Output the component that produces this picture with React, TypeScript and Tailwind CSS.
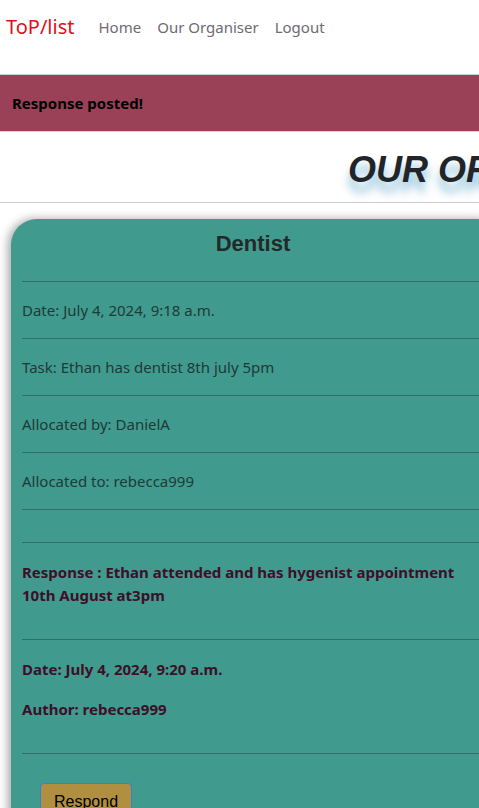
import React from 'react';

const body = { fontFamily: '"Noto Sans", "Open Sans", sans-serif' };
const arial = { fontFamily: '"Liberation Sans", Arial, sans-serif' };

// one line of task detail, separated by a rule underneath
function DetailRow({ children }: { children: React.ReactNode }) {
  return (
    <div className="border-b border-[#2f6f66]">
      <p className="py-4 leading-6 text-[15px] text-[#1d3b37]">{children}</p>
    </div>
  );
}

export default function App() {
  return (
    <div className="w-full min-h-[808px] overflow-hidden bg-white" style={body}>
      {/* Navbar */}
      <nav className="h-[75px] flex items-start pt-[13px] pl-[6px] border-b border-[#bcd9d6]">
        <span className="text-[20px] leading-7 text-[#e0101c]">ToP/list</span>
        <ul className="flex ml-[24px] gap-4 text-[15px] leading-7 text-[#6f6a72]">
          <li>Home</li>
          <li>Our Organiser</li>
          <li>Logout</li>
        </ul>
      </nav>

      {/* Alert */}
      <div className="h-[57px] bg-[#9a4158] border-b border-[#d5d5d5] flex items-center pl-[12px] pt-[1px]">
        <strong className="text-[15px] text-black">Response posted!</strong>
      </div>

      {/* Page heading */}
      <div className="w-[1004px] h-[71px] border-b border-[#cccccc] flex justify-center items-center pt-[6px]">
        <h1
          className="text-[36px] font-bold italic text-[#212529] whitespace-nowrap [text-shadow:0_10px_10px_rgba(90,165,200,0.7)]"
          style={arial}
        >
          OUR ORGANISER
        </h1>
      </div>

      {/* Task card */}
      <div className="mt-[16px] ml-[11px] w-[484px] bg-[#419a8e] rounded-tl-[26px] rounded-tr-[14px] shadow-[-3px_0_10px_rgba(0,0,0,0.35)] px-[11px] pb-10">
        <div className="border-b border-[#2f6f66] h-[63px] flex items-center justify-center pb-[14px]">
          <h2 className="text-[22px] font-bold text-[#222a29]" style={arial}>
            Dentist
          </h2>
        </div>
        <DetailRow>Date: July 4, 2024, 9:18 a.m.</DetailRow>
        <DetailRow>Task: Ethan has dentist 8th july 5pm</DetailRow>
        <DetailRow>Allocated by: DanielA</DetailRow>
        <DetailRow>Allocated to: rebecca999</DetailRow>

        <div className="h-[33px] border-b border-[#2f6f66]" />

        <div className="border-b border-[#2f6f66] pt-[18px] pb-[32px]">
          <p className="font-bold text-[15px] leading-[23px] text-[#3d0f28]">
            Response : Ethan attended and has hygenist appointment 10th August at3pm
          </p>
        </div>

        <div className="border-b border-[#2f6f66] pt-[17px] pb-[32px] font-bold text-[15px] text-[#3d0f28] leading-6">
          <p>Date: July 4, 2024, 9:20 a.m.</p>
          <p className="mt-4">Author: rebecca999</p>
        </div>

        <div className="pt-[29px] pl-[18px]">
          <button
            className="h-[38px] px-[13px] bg-[#b08f40] border border-[#3b7ddd] rounded text-[16px] text-black"
            style={arial}
          >
            Respond
          </button>
        </div>
      </div>
    </div>
  );
}
